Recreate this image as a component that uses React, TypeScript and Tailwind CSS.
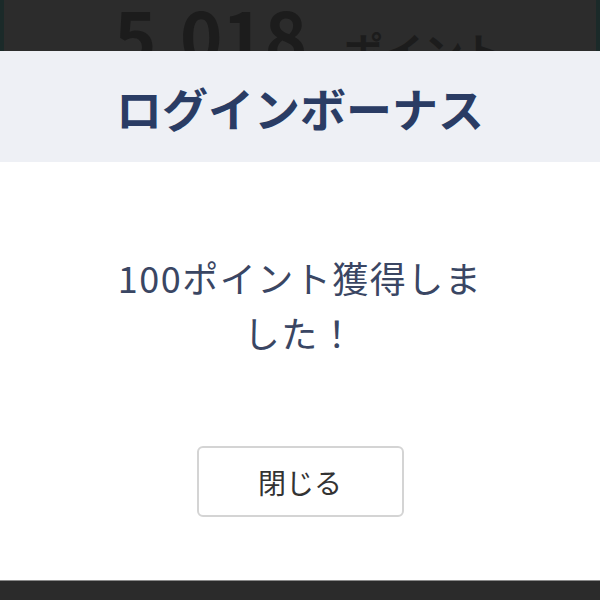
export default function App() {
  const font = { fontFamily: '"Noto Sans CJK JP", "Noto Sans", sans-serif' }
  return (
    <div className="w-[600px] h-[600px] overflow-hidden bg-[#2c2c2c] flex flex-col" style={font}>
      <div className="h-[51px] shrink-0 flex border-x-4 border-[#1b2a29] overflow-hidden">
        <div className="flex items-start gap-[36px] pl-[110px] -mt-[3px]">
          <span className="text-[72px] leading-none font-bold text-[#1c1c1c]">5,018</span>
          <span className="text-[40px] leading-none font-bold text-[#1c1c1c] mt-[33px]">ポイント</span>
        </div>
      </div>

      <div className="h-[529px] shrink-0 bg-white flex flex-col">
        <div className="h-[111px] bg-[#eef0f5] flex items-center justify-center">
          <h1 className="text-[46px] font-bold text-[#2a3c64] leading-none">ログインボーナス</h1>
        </div>
        <div className="flex-1 flex flex-col items-center pt-[88px]">
          <p className="w-[390px] text-center text-[36px] leading-[55px] tracking-[1.5px] text-[#3a4663]">
            100ポイント獲得しました！
          </p>
          <button className="mt-[86px] w-[207px] h-[71px] rounded-md border-2 border-[#d4d4d4] bg-white text-[28px] text-[#333] flex items-center justify-center">
            閉じる
          </button>
        </div>
      </div>

      <div className="flex-1 border-t border-[#8a8a8a] bg-[#2b2b2b]" />
    </div>
  )
}
